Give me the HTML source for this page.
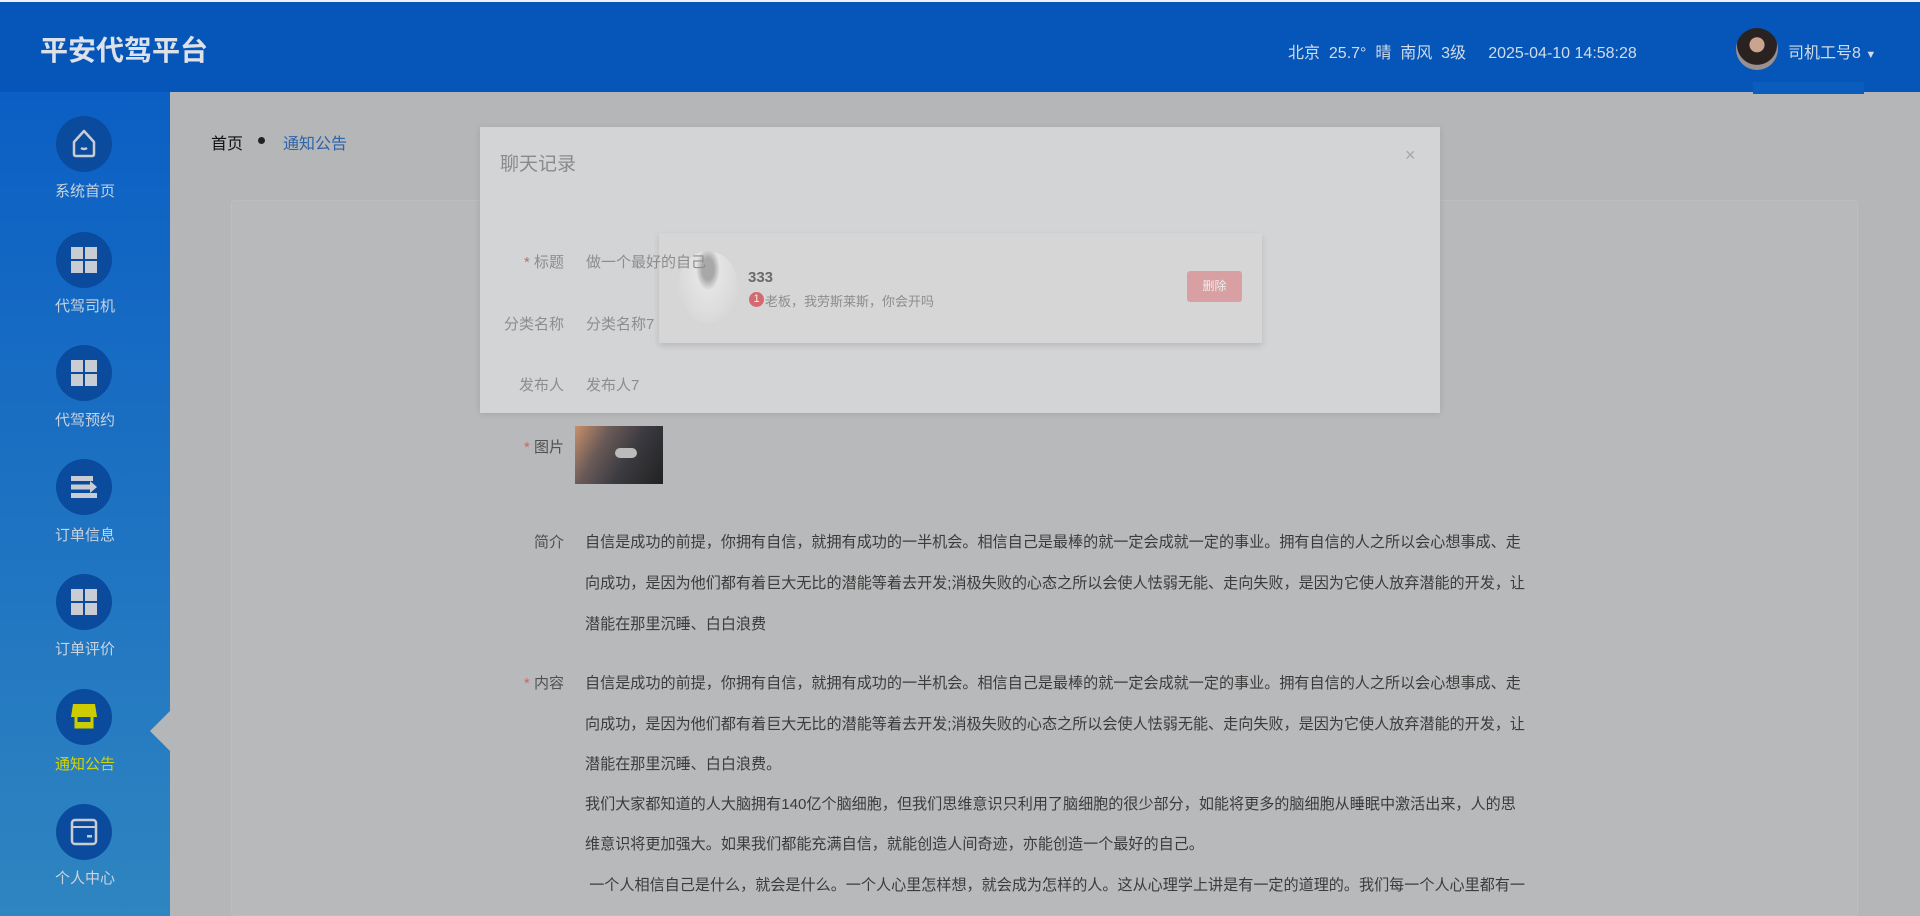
<!DOCTYPE html>
<html><head><meta charset="utf-8"><style>
*{margin:0;padding:0;box-sizing:border-box}
body{width:1920px;height:916px;overflow:hidden;background:#b5b6b8;font-family:"Liberation Sans","Noto Sans CJK SC",sans-serif;position:relative}
.hdr{position:absolute;left:0;top:0;width:1920px;height:92px;background:#0556b8;border-top:2px solid #eef2f8}
.title{position:absolute;left:40px;top:27px;font-size:28px;font-weight:bold;color:#dde2ea}
.wx{position:absolute;left:1288px;top:37px;font-size:16px;color:#d2dbe8}
.av{position:absolute;left:1736px;top:26px;width:42px;height:42px;border-radius:50%;background:radial-gradient(circle at 50% 40%,#c9a58f 0 22%,#2a2220 24% 60%,#9a9090 62%)}
.nm{position:absolute;left:1788px;top:37px;font-size:16px;color:#d2dbe8}
.side{position:absolute;left:0;top:92px;width:170px;height:824px;background:linear-gradient(#0b5fc4,#2f85c0)}
.ci{position:absolute;left:56px;width:56px;height:56px;border-radius:50%;background:#0a4b9e}
.lb{position:absolute;left:0;width:170px;text-align:center;font-size:15px;color:#c9d3df}
.g{position:absolute;left:15px;top:15px;width:26px;height:26px}
.g i{position:absolute;width:12px;height:12px;background:#c9ccd2}
.crumb{position:absolute;top:130px;font-size:16px}
.card{position:absolute;left:231px;top:200px;width:1627px;height:716px;background:#b8b9ba;border:1px solid #bdbebf;border-radius:4px}
.modal{position:absolute;left:480px;top:127px;width:960px;height:286px;background:#d3d4d6;box-shadow:0 1px 6px rgba(0,0,0,.1)}
.lab{position:absolute;width:120px;text-align:right;font-size:15px;color:#4f5050}
.star{color:#c76a6a}
.txt{position:absolute;left:585px;font-size:15.1px;color:#3b3b3b;white-space:nowrap}
</style></head><body>
<div class="hdr">
<div class="title">平安代驾平台</div>
<div class="wx">北京&nbsp; 25.7°&nbsp; 晴&nbsp; 南风&nbsp; 3级&nbsp;&nbsp;&nbsp;&nbsp; 2025-04-10 14:58:28</div>
<div class="av"></div>
<div class="nm">司机工号8 <span style="font-size:11px">▼</span></div>
<div style="position:absolute;left:1753px;top:80px;width:111px;height:12px;background:#0a5cbd"></div>
</div>
<div class="side">
<div class="ci" style="top:24px"><svg width="56" height="56" viewBox="0 0 56 56"><path d="M18 26 L28 15 L38 26 V38 Q38 40 36 40 H20 Q18 40 18 38 Z" fill="none" stroke="#c9ccd2" stroke-width="2.5" stroke-linejoin="round"/><path d="M25 32 Q28 34 31 32" fill="none" stroke="#c9ccd2" stroke-width="2.5"/></svg></div>
<div class="lb" style="top:88px">系统首页</div>
<div class="ci" style="top:140px"><div class="g"><i style="left:0;top:0"></i><i style="left:14px;top:0"></i><i style="left:0;top:14px"></i><i style="left:14px;top:14px"></i></div></div>
<div class="lb" style="top:203px">代驾司机</div>
<div class="ci" style="top:253px"><div class="g"><i style="left:0;top:0"></i><i style="left:14px;top:0"></i><i style="left:0;top:14px"></i><i style="left:14px;top:14px"></i></div></div>
<div class="lb" style="top:317px">代驾预约</div>
<div class="ci" style="top:367px"><svg width="56" height="56" viewBox="0 0 56 56"><rect x="15" y="17" width="22" height="5" fill="#c9ccd2"/><rect x="15" y="25.5" width="19" height="5" fill="#c9ccd2"/><path d="M34 22 L41 28 L34 34Z" fill="#c9ccd2"/><rect x="15" y="34" width="26" height="5" fill="#c9ccd2"/></svg></div>
<div class="lb" style="top:432px">订单信息</div>
<div class="ci" style="top:482px"><div class="g"><i style="left:0;top:0"></i><i style="left:14px;top:0"></i><i style="left:0;top:14px"></i><i style="left:14px;top:14px"></i></div></div>
<div class="lb" style="top:546px">订单评价</div>
<div class="ci" style="top:597px"><svg width="56" height="56" viewBox="0 0 56 56"><path d="M17 15 H39 L41 28 H15 Z" fill="#cccc00"/><path d="M20 28 V38 H36 V28" fill="none" stroke="#cccc00" stroke-width="3"/><rect x="20" y="33" width="16" height="6" fill="#cccc00"/></svg></div>
<div class="lb" style="top:661px;color:#d4d400">通知公告</div>
<div class="ci" style="top:712px"><svg width="56" height="56" viewBox="0 0 56 56"><rect x="16" y="16" width="24" height="24" rx="3" fill="none" stroke="#c9ccd2" stroke-width="2.5"/><line x1="16" y1="23" x2="40" y2="23" stroke="#c9ccd2" stroke-width="2"/><rect x="31" y="31" width="5" height="2.5" fill="#c9ccd2"/></svg></div>
<div class="lb" style="top:775px">个人中心</div>
</div>
<div style="position:absolute;left:150px;top:711px;width:0;height:0;border-top:20px solid transparent;border-bottom:20px solid transparent;border-right:20px solid #b5b6b8"></div>
<div class="crumb" style="left:211px;color:#111">首页</div>
<div style="position:absolute;left:258px;top:137px;width:7px;height:7px;border-radius:50%;background:#222"></div>
<div class="crumb" style="left:283px;color:#2f63a8">通知公告</div>
<div class="card"></div>
<div class="lab" style="left:444px;top:436px"><span class="star">* </span>图片</div>
<div style="position:absolute;left:575px;top:426px;width:88px;height:58px;background:linear-gradient(120deg,#c98f6a,#6a5a58 30%,#3a3a40 60%,#222 100%)"><div style="position:absolute;left:40px;top:22px;width:22px;height:10px;background:#bbb;border-radius:5px"></div></div>
<div class="lab" style="left:444px;top:531px">简介</div>
<div class="txt" style="top:530px">自信是成功的前提，你拥有自信，就拥有成功的一半机会。相信自己是最棒的就一定会成就一定的事业。拥有自信的人之所以会心想事成、走</div>
<div class="txt" style="top:571px">向成功，是因为他们都有着巨大无比的潜能等着去开发;消极失败的心态之所以会使人怯弱无能、走向失败，是因为它使人放弃潜能的开发，让</div>
<div class="txt" style="top:612px">潜能在那里沉睡、白白浪费</div>
<div class="lab" style="left:444px;top:672px"><span class="star">* </span>内容</div>
<div class="txt" style="top:671px">自信是成功的前提，你拥有自信，就拥有成功的一半机会。相信自己是最棒的就一定会成就一定的事业。拥有自信的人之所以会心想事成、走</div>
<div class="txt" style="top:712px">向成功，是因为他们都有着巨大无比的潜能等着去开发;消极失败的心态之所以会使人怯弱无能、走向失败，是因为它使人放弃潜能的开发，让</div>
<div class="txt" style="top:752px">潜能在那里沉睡、白白浪费。</div>
<div class="txt" style="top:792px">我们大家都知道的人大脑拥有140亿个脑细胞，但我们思维意识只利用了脑细胞的很少部分，如能将更多的脑细胞从睡眠中激活出来，人的思</div>
<div class="txt" style="top:832px">维意识将更加强大。如果我们都能充满自信，就能创造人间奇迹，亦能创造一个最好的自己。</div>
<div class="txt" style="top:873px">&nbsp;一个人相信自己是什么，就会是什么。一个人心里怎样想，就会成为怎样的人。这从心理学上讲是有一定的道理的。我们每一个人心里都有一</div>
<div class="modal">
<div style="position:absolute;left:20px;top:22px;font-size:19px;color:#8a8a8a">聊天记录</div>
<div style="position:absolute;left:925px;top:18px;font-size:18px;color:#a8a8a8">×</div>
<div class="lab" style="left:-36px;top:124px;color:#8d8d8d"><span class="star">* </span>标题</div>
<div class="lab" style="left:-36px;top:186px;color:#8d8d8d">分类名称</div>
<div style="position:absolute;left:106px;top:186px;font-size:15px;color:#8d8d8d">分类名称7</div>
<div class="lab" style="left:-36px;top:247px;color:#8d8d8d">发布人</div>
<div style="position:absolute;left:106px;top:247px;font-size:15px;color:#8d8d8d">发布人7</div>
<div style="position:absolute;left:179px;top:106px;width:603px;height:110px;background:#d6d6d6;box-shadow:0 3px 6px rgba(0,0,0,.12)">
<div style="position:absolute;left:19px;top:18px;width:60px;height:72px;border-radius:50%;background:radial-gradient(ellipse at 50% 25%,#a8a8a8 0 14%,#e4e4e4 28%,#dcdcdc 60%,#cfcfcf)"></div>
<div style="position:absolute;left:89px;top:36px;font-size:15px;font-weight:bold;color:#6a6a6a">333</div>
<div style="position:absolute;left:90px;top:59px;width:15px;height:15px;border-radius:50%;background:#d46a70;color:#eee;font-size:11px;text-align:center;line-height:15px">1</div>
<div style="position:absolute;left:106px;top:58px;font-size:13px;color:#8d8d8d">老板，我劳斯莱斯，你会开吗</div>
<div style="position:absolute;left:528px;top:38px;width:55px;height:31px;background:#d9a0a4;border-radius:3px;color:#ececec;font-size:12px;text-align:center;line-height:31px">删除</div>
</div>
<div style="position:absolute;left:106px;top:124px;font-size:15px;color:#8d8d8d;z-index:2">做一个最好的自己</div>
</div>
</body></html>
